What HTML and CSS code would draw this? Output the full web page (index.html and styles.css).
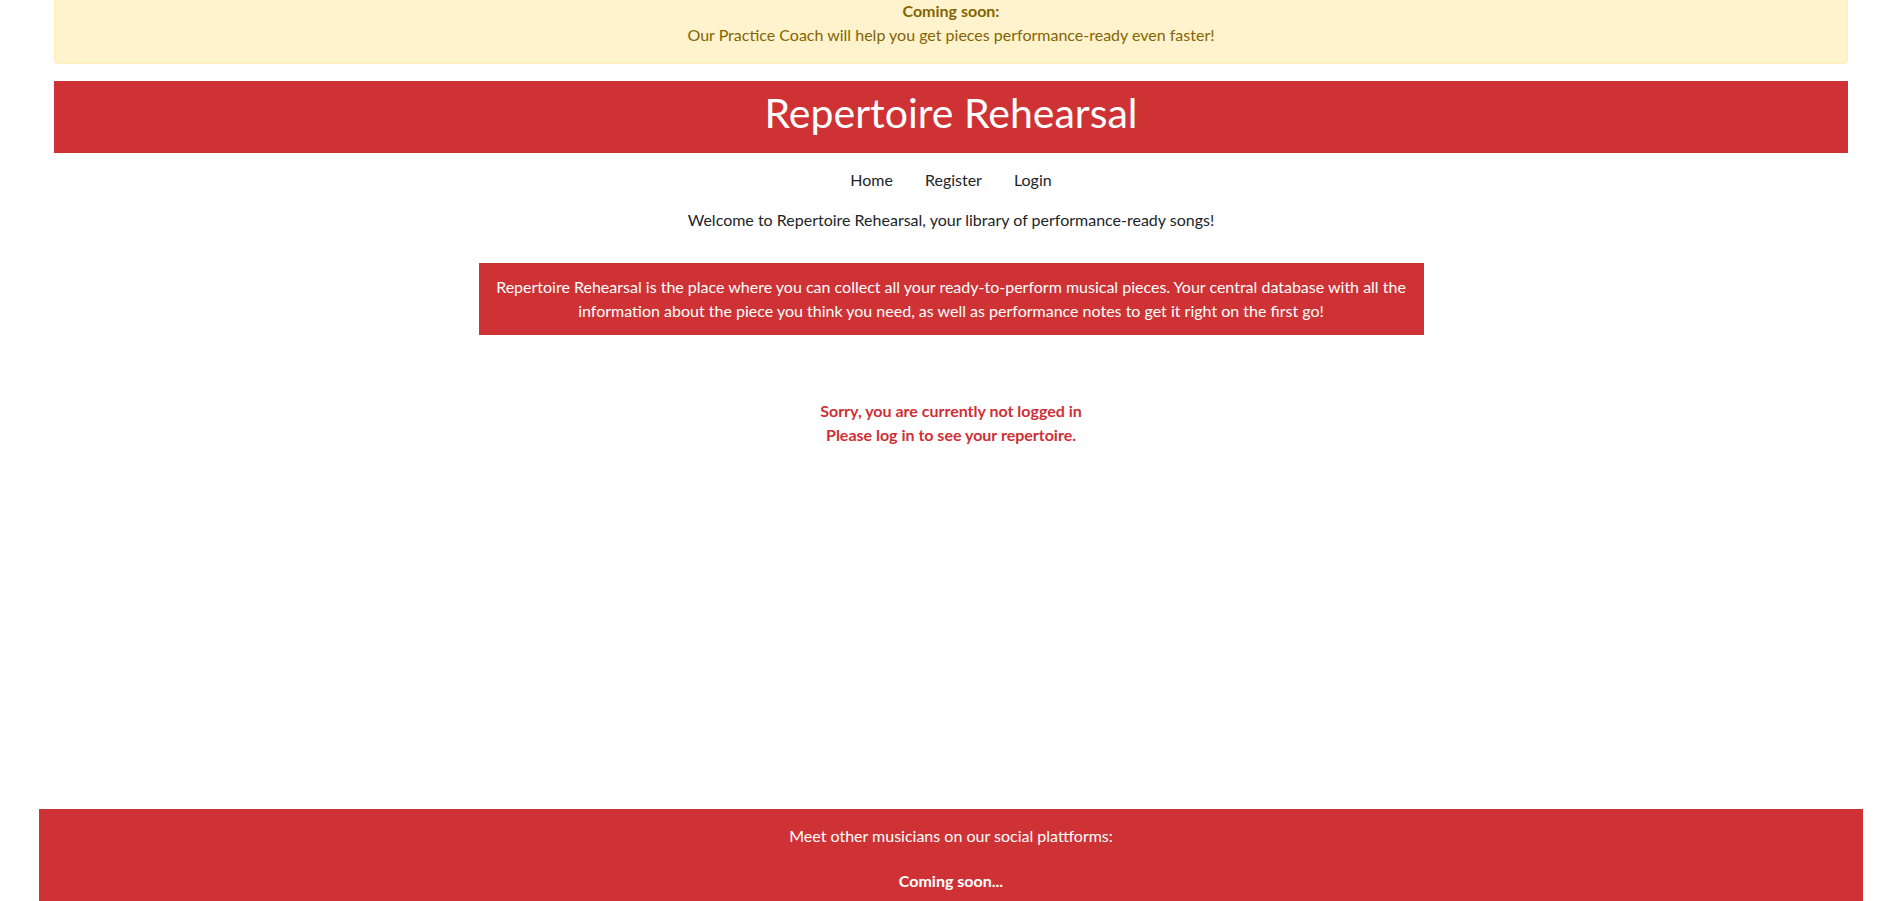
FILE: index.html
```html
<!DOCTYPE html>
<html lang="en">
<head>
<meta charset="utf-8">
<title>Repertoire Rehearsal</title>
<link rel="stylesheet" href="styles.css">
</head>
<body>
<div class="page">
  <div class="wrap">
    <div class="alert">
      <p class="alert-title">Coming soon:</p>
      <p>Our Practice Coach will help you get pieces performance-ready even faster!</p>
    </div>
    <header class="banner">
      <h1>Repertoire Rehearsal</h1>
    </header>
    <nav class="nav">
      <a href="#">Home</a>
      <a href="#">Register</a>
      <a href="#">Login</a>
    </nav>
    <p class="welcome">Welcome to Repertoire Rehearsal, your library of performance-ready songs!</p>
    <div class="intro">Repertoire Rehearsal is the place where you can collect all your ready-to-perform musical pieces. Your central database with all the information about the piece you think you need, as well as performance notes to get it right on the first go!</div>
    <div class="notice">
      <p>Sorry, you are currently not logged in</p>
      <p>Please log in to see your repertoire.</p>
    </div>
  </div>
  <footer class="footer">
    <p>Meet other musicians on our social plattforms:</p>
    <p class="soon">Coming soon...</p>
  </footer>
</div>
</body>
</html>
```
FILE: styles.css
```css
html, body {
  margin: 0;
  padding: 0;
}
body {
  font-family: Lato, "Open Sans", sans-serif;
  font-size: 16px;
  line-height: 24px;
  color: #212529;
  background: #fff;
  overflow: hidden;
}
p {
  margin: 0;
}
.page {
  display: flex;
  flex-direction: column;
  min-height: 100vh;
}
.wrap {
  margin: 0 39px 0 54px;
  display: flex;
  flex-direction: column;
  align-items: center;
}
.alert {
  align-self: stretch;
  background: #fff3cd;
  color: #856404;
  border: 1px solid #ffeeba;
  border-top: none;
  border-radius: 0 0 4px 4px;
  text-align: center;
  padding: 0 20px 16px;
}
.alert-title {
  font-weight: 700;
  margin-top: -1px;
}
.banner {
  align-self: stretch;
  margin-top: 17px;
  background: #ce3234;
  color: #fff;
  text-align: center;
  height: 72px;
  display: flex;
  align-items: center;
  justify-content: center;
}
.banner h1 {
  margin: 0;
  font-size: 41px;
  font-weight: 400;
  line-height: 48px;
  position: relative;
  top: -4px;
}
.nav {
  display: flex;
  justify-content: center;
  margin-top: 7px;
}
.nav a {
  color: #212529;
  text-decoration: none;
  padding: 8px 16px;
}
.welcome {
  margin-top: 8px;
  text-align: center;
}
.intro {
  margin-top: 31px;
  width: 945px;
  box-sizing: border-box;
  background: #ce3234;
  color: #fff;
  text-align: center;
  padding: 12px 16px;
}
.notice {
  margin-top: 64px;
  color: #cf2f35;
  font-weight: 700;
  text-align: center;
}
.footer {
  margin: auto 24px 0 39px;
  background: #ce3234;
  color: #fff;
  text-align: center;
  padding: 15px 0 8px;
  height: 92px;
  box-sizing: border-box;
}
.footer .soon {
  margin-top: 21px;
  font-weight: 700;
}
```
